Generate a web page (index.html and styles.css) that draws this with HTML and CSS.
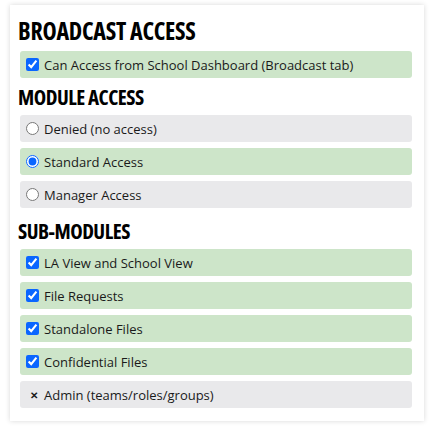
FILE: index.html
```html
<!DOCTYPE html>
<html lang="en">
<head>
    <meta charset="UTF-8">
    <meta name="viewport" content="width=device-width, initial-scale=1.0">
    <title>Access Settings</title>
    <link rel="stylesheet" href="styles.css">
</head>
<body>

<div class="access-card">
    <h1 class="section-title big">Broadcast Access</h1>
    <label class="option on">
        <input type="checkbox" checked> Can Access from School Dashboard (Broadcast tab)
    </label>

    <h2 class="section-title">Module Access</h2>
    <div class="option-group">
        <label class="option off">
            <input type="radio" name="module"> Denied (no access)
        </label>
        <label class="option on">
            <input type="radio" name="module" checked> Standard Access
        </label>
        <label class="option off">
            <input type="radio" name="module"> Manager Access
        </label>
    </div>

    <h2 class="section-title">Sub-Modules</h2>
    <label class="option on">
        <input type="checkbox" checked> LA View and School View
    </label>
    <label class="option on">
        <input type="checkbox" checked> File Requests
    </label>
    <label class="option on">
        <input type="checkbox" checked> Standalone Files
    </label>
    <label class="option on">
        <input type="checkbox" checked> Confidential Files
    </label>
    <div class="option off">
        <span class="cross">&#x2715;</span> Admin (teams/roles/groups)
    </div>
</div>

</body>
</html>
```

FILE: styles.css
```css
body {
    margin: 0;
    background-color: #fff;
    font-family: "Open Sans", Arial, sans-serif;
    color: #1a1a1a;
}
.access-card {
    margin: 5px 11px 11px 10px;
    padding: 11px 12px 7px 10px;
    background-color: #fff;
    box-shadow: 0 0 5px rgba(0, 0, 0, 0.16);
}
.section-title {
    margin: 3px 0 5px -2px;
    font-family: "Open Sans", sans-serif;
    font-stretch: 75%;
    font-weight: 700;
    font-size: 21px;
    line-height: 26px;
    letter-spacing: -0.5px;
    text-transform: uppercase;
    color: #000;
}
.section-title.big {
    margin-top: 0;
    margin-bottom: 5px;
    font-size: 24px;
    line-height: 30px;
    letter-spacing: -0.25px;
}
.option {
    display: flex;
    align-items: center;
    height: 27px;
    padding-left: 6px;
    margin-bottom: 6px;
    border-radius: 3px;
    font-size: 13px;
    box-sizing: border-box;
}
.option input {
    margin: 0 5px 0 0;
    width: 13px;
    height: 13px;
    accent-color: #0a66ff;
}
.on {
    background-color: #cde5c9;
}
.off {
    background-color: #e9e9eb;
}
.option-group {
    margin-bottom: 10px;
}
.cross {
    display: inline-block;
    width: 13px;
    margin: 0 4px 0 1px;
    font-size: 10px;
    font-weight: 700;
    text-align: center;
}
```
